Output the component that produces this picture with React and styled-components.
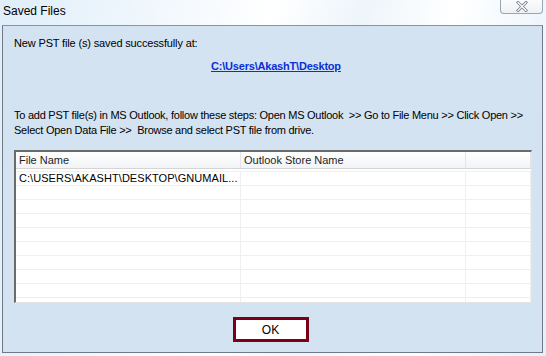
import React from "react";
import styled, { createGlobalStyle } from "styled-components";

const Global = createGlobalStyle`
  html, body { margin: 0; padding: 0; }
  body {
    width: 546px;
    height: 356px;
    overflow: hidden;
    background: linear-gradient(100deg, #dfeefa 0%, #f4f9fd 30%, #ffffff 45%, #eef5fb 60%, #ffffff 75%, #e4f0f9 100%);
    font-family: "Liberation Sans", Arial, sans-serif;
  }
`;

const Window = styled.div`
  width: 546px;
  height: 356px;
  display: flex;
  flex-direction: column;
  box-sizing: border-box;
`;

const TitleBar = styled.div`
  height: 25px;
  display: flex;
  align-items: flex-start;
  justify-content: space-between;
  padding-left: 3px;
  box-sizing: border-box;
`;

const Title = styled.div`
  font-family: "Liberation Sans", Arial, sans-serif;
  font-size: 12px;
  line-height: 14px;
  margin-top: 4px;
  color: #000;
`;

const CloseButton = styled.div`
  width: 43px;
  height: 14px;
  margin-right: 3px;
  box-sizing: border-box;
  border: 1px solid #9aa6b2;
  border-top: none;
  border-radius: 0 0 4px 4px;
  background: linear-gradient(#fbfcfd, #eef2f6);
  display: flex;
  align-items: center;
  justify-content: center;
`;

const Panel = styled.div`
  margin-left: 2px;
  width: 541px;
  height: 328px;
  box-sizing: border-box;
  border: 1px solid #6f7a86;
  border-top-color: #8a949e;
  background: #d4e3f2;
  display: flex;
  flex-direction: column;
  padding: 0 10px 0 11px;
`;

const Text = styled.div`
  font-family: "Liberation Sans", Arial, sans-serif;
  font-size: 11px;
  line-height: 13px;
  color: #000;
  white-space: nowrap;
  letter-spacing: ${(p) => p.$ls || "0"};
`;

const SavedLine = styled(Text)`
  margin-top: 11px;
`;

const LinkRow = styled.div`
  display: flex;
  justify-content: flex-start;
  padding-left: 197px;
  margin-top: 10px;
`;

const Link = styled.a`
  font-family: "Liberation Sans", Arial, sans-serif;
  font-size: 11px;
  font-weight: bold;
  line-height: 13px;
  color: #0a2fd8;
  text-decoration: underline;
  letter-spacing: -0.2px;
`;

const Steps = styled.div`
  margin-top: 35px;
  display: flex;
  flex-direction: column;
`;

const StepLine = styled(Text)`
  line-height: 15px;
  letter-spacing: -0.25px;
`;

const List = styled.div`
  margin-top: 12px;
  width: 518px;
  height: 153px;
  box-sizing: border-box;
  border-top: 2px solid #6b6b6b;
  border-left: 2px solid #6b6b6b;
  border-right: 1px solid #e3e3e3;
  border-bottom: 1px solid #e3e3e3;
  background: #fff;
  overflow: hidden;
`;

const Cols = "225px 225px 1fr";

const HeaderRow = styled.div`
  display: grid;
  grid-template-columns: ${Cols};
  height: 17px;
  background: linear-gradient(#ffffff, #f1f3f6);
  border-bottom: 1px solid #d5d5d5;
  box-sizing: border-box;
`;

const HeaderCell = styled.div`
  font-family: "Liberation Sans", Arial, sans-serif;
  font-size: 11px;
  line-height: 16px;
  color: #1e1e1e;
  padding-left: 3px;
  border-right: 1px solid #e2e4e8;
  white-space: nowrap;
`;

const Body = styled.div`
  padding-top: 2px;
`;

const Row = styled.div`
  display: grid;
  grid-template-columns: ${Cols};
  height: 14px;
  border-top: 1px solid #efefef;
  box-sizing: border-box;
`;

const Cell = styled.div`
  font-family: "Liberation Sans", Arial, sans-serif;
  font-size: 11px;
  line-height: 13px;
  color: #000;
  padding-left: 3px;
  border-right: 1px solid #efefef;
  white-space: nowrap;
  overflow: hidden;
  letter-spacing: 0.05px;
`;

const Footer = styled.div`
  display: flex;
  justify-content: center;
  margin-top: 14px;
  padding-right: 5px;
`;

const OkButton = styled.button`
  width: 76px;
  height: 25px;
  box-sizing: border-box;
  border: 3px solid #7a0018;
  background: #fff;
  font-family: "Liberation Sans", Arial, sans-serif;
  font-size: 12px;
  font-weight: normal;
  color: #000;
  padding: 0;
  cursor: pointer;
`;

const rows = [
  ["C:\\USERS\\AKASHT\\DESKTOP\\GNUMAIL...", "", ""],
  ...Array.from({ length: 9 }, () => ["", "", ""]),
];

export default function App() {
  return (
    <>
      <Global />
      <Window>
        <TitleBar>
          <Title>Saved Files</Title>
          <CloseButton>
            <svg width="12" height="11" viewBox="0 0 12 11">
              <path d="M2 1.5 L10 9.5 M10 1.5 L2 9.5" stroke="#7f8790" strokeWidth="3" strokeLinecap="square" />
              <path d="M2 1.5 L10 9.5 M10 1.5 L2 9.5" stroke="#ffffff" strokeWidth="1.2" strokeLinecap="square" />
            </svg>
          </CloseButton>
        </TitleBar>
        <Panel>
          <SavedLine $ls="-0.15px">New PST file (s) saved successfully at:</SavedLine>
          <LinkRow>
            <Link href="#">C:\Users\AkashT\Desktop</Link>
          </LinkRow>
          <Steps>
            <StepLine>
              To add PST file(s) in MS Outlook, follow these steps: Open MS Outlook&nbsp; &gt;&gt; Go to File Menu &gt;&gt; Click Open &gt;&gt;
            </StepLine>
            <StepLine>Select Open Data File &gt;&gt;&nbsp; Browse and select PST file from drive.</StepLine>
          </Steps>
          <List>
            <HeaderRow>
              <HeaderCell>File Name</HeaderCell>
              <HeaderCell>Outlook Store Name</HeaderCell>
              <HeaderCell />
            </HeaderRow>
            <Body>
              {rows.map((r, i) => (
                <Row key={i}>
                  {r.map((c, j) => (
                    <Cell key={j}>{c}</Cell>
                  ))}
                </Row>
              ))}
            </Body>
          </List>
          <Footer>
            <OkButton>OK</OkButton>
          </Footer>
        </Panel>
      </Window>
    </>
  );
}
